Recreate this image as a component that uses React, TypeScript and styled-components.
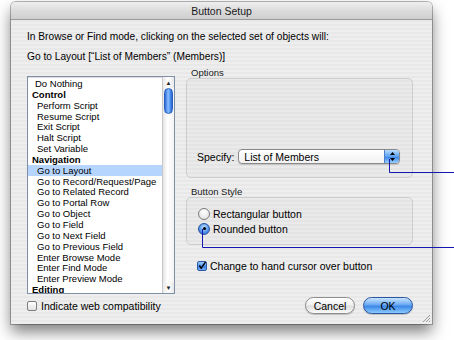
import React from 'react';
import styled, { createGlobalStyle, css } from 'styled-components';

const GlobalStyle = createGlobalStyle`
  html, body {
    margin: 0;
    padding: 0;
    background: #ffffff;
  }
  body {
    font-family: "Liberation Sans", Arial, sans-serif;
    font-size: 10px;
    color: #000;
  }
`;

const Page = styled.div`
  position: relative;
  width: 454px;
  height: 340px;
  overflow: hidden;
  padding: 2px 0 0 11px;
  box-sizing: border-box;
`;

const Window = styled.div`
  width: 421px;
  height: 322px;
  display: flex;
  flex-direction: column;
  border-radius: 5px 5px 0 0;
  box-shadow: 0 0 0 1px rgba(0, 0, 0, 0.28), 0 8px 15px rgba(0, 0, 0, 0.5);
  background: repeating-linear-gradient(
    to bottom,
    #eeeeee 0px,
    #eeeeee 2px,
    #e8e8e8 2px,
    #e8e8e8 4px
  );
  overflow: hidden;
`;

const TitleBar = styled.div`
  height: 17px;
  flex: none;
  display: flex;
  align-items: center;
  justify-content: center;
  font-size: 10.5px;
  color: #1a1a1a;
  background: linear-gradient(to bottom, #efefef 0%, #dadada 55%, #cfcfcf 100%);
  border-bottom: 1px solid #9a9a9a;
`;

const Body = styled.div`
  flex: 1;
  display: flex;
  flex-direction: column;
  padding: 0 18px 0 16px;
  position: relative;
`;

const Line = styled.div<{ $top: number }>`
  height: 13px;
  line-height: 13px;
  margin-top: ${p => p.$top}px;
  white-space: nowrap;
  font-size: 10.2px;
`;

const Main = styled.div`
  display: flex;
  gap: 11px;
  margin-top: 13px;
  flex: 1;
`;

const LeftCol = styled.div`
  width: 148px;
  display: flex;
  flex-direction: column;
`;

const ListBox = styled.div`
  height: 218px;
  box-sizing: border-box;
  border: 1px solid #7f8fa6;
  box-shadow: inset 0 1px 1px rgba(0, 0, 0, 0.15);
  background: #fff;
  display: flex;
  overflow: hidden;
`;

const Items = styled.div`
  flex: 1;
  padding-top: 1px;
`;

const Item = styled.div<{ $head?: boolean; $sel?: boolean; $indent: number }>`
  height: 10.85px;
  line-height: 11px;
  font-size: 9.5px;
  white-space: nowrap;
  padding-left: ${p => p.$indent}px;
  ${p => p.$head && css`font-weight: bold;`}
  ${p => p.$sel && css`background: #b5d5ff;`}
`;

const ScrollBar = styled.div`
  width: 11px;
  flex: none;
  display: flex;
  flex-direction: column;
  border-left: 1px solid #c8c8c8;
  background: linear-gradient(to right, #e4e4e4, #ffffff 40%, #f4f4f4);
`;

const Arrow = styled.div`
  height: 11px;
  flex: none;
  display: flex;
  align-items: center;
  justify-content: center;
  font-size: 6px;
  color: #222;
  background: linear-gradient(to right, #eaeaea, #ffffff 50%, #e8e8e8);
`;

const Thumb = styled.div`
  height: 26px;
  margin: 0 1px;
  border-radius: 5px;
  border: 1px solid #2a5fbf;
  background: linear-gradient(to right, #2a6ad8, #8cc0ff 45%, #4a8ff0 75%, #2a66d0);
  box-sizing: border-box;
`;

const Track = styled.div`
  flex: 1;
`;

const CheckRow = styled.label<{ $top: number }>`
  display: flex;
  align-items: center;
  gap: 4px;
  height: 13px;
  margin-top: ${p => p.$top}px;
  white-space: nowrap;
  font-size: 10.5px;
`;

const Box = styled.span<{ $on?: boolean }>`
  width: 10px;
  height: 10px;
  flex: none;
  box-sizing: border-box;
  border-radius: 2px;
  border: 1px solid #7d7d7d;
  display: flex;
  align-items: center;
  justify-content: center;
  background: ${p =>
    p.$on
      ? 'linear-gradient(to bottom, #9ccbff, #3d86e6 60%, #70b0ff)'
      : 'linear-gradient(to bottom, #ffffff, #e3e3e3)'};
  ${p => p.$on && css`border-color: #2a57a8;`}
`;

const RightCol = styled.div`
  width: 227px;
  display: flex;
  flex-direction: column;
`;

const GroupLabel = styled.div<{ $top: number }>`
  height: 11px;
  line-height: 11px;
  font-size: 9.5px;
  margin: ${p => p.$top}px 0 0 5px;
  color: #1a1a1a;
`;

const Group = styled.div<{ $h: number; $top: number }>`
  height: ${p => p.$h}px;
  box-sizing: border-box;
  margin-top: ${p => p.$top}px;
  border: 1px solid #cdcdcd;
  border-radius: 5px;
  background: rgba(0, 0, 0, 0.015);
  display: flex;
  flex-direction: column;
`;

const SpecifyRow = styled.div`
  margin-top: auto;
  margin-bottom: 13px;
  display: flex;
  align-items: center;
  padding-left: 10px;
  gap: 4px;
  font-size: 10.5px;
`;

const Popup = styled.div`
  width: 162px;
  height: 15px;
  box-sizing: border-box;
  border: 1px solid #8a8a8a;
  border-radius: 4px;
  background: linear-gradient(to bottom, #ffffff, #f2f2f2);
  display: flex;
  align-items: center;
  overflow: hidden;
  box-shadow: 0 1px 1px rgba(0, 0, 0, 0.15);
`;

const PopupText = styled.span`
  flex: 1;
  padding-left: 5px;
  font-size: 10.5px;
`;

const PopupArrows = styled.span`
  width: 14px;
  height: 100%;
  display: flex;
  align-items: center;
  justify-content: center;
  border-left: 1px solid #4a7fcc;
  background: linear-gradient(to bottom, #b8dcff, #5aa0f0 50%, #3f86e4 55%, #9ad0ff);
`;

const RadioRow = styled.div<{ $top: number }>`
  display: flex;
  align-items: center;
  gap: 3px;
  height: 13px;
  margin: ${p => p.$top}px 0 0 11px;
  font-size: 10.5px;
  white-space: nowrap;
`;

const Radio = styled.span<{ $on?: boolean }>`
  width: 12px;
  height: 12px;
  flex: none;
  box-sizing: border-box;
  border-radius: 50%;
  border: 1px solid #7a7a7a;
  display: flex;
  align-items: center;
  justify-content: center;
  background: ${p =>
    p.$on
      ? 'radial-gradient(circle at 50% 35%, #c4e2ff, #4b90ea 60%, #2f6fd0)'
      : 'radial-gradient(circle at 50% 30%, #ffffff, #dcdcdc)'};
  ${p => p.$on && css`border-color: #28509a;`}
`;

const Dot = styled.span`
  width: 3px;
  height: 3px;
  border-radius: 50%;
  background: #000;
`;

const Buttons = styled.div`
  margin-top: auto;
  margin-bottom: 10px;
  display: flex;
  justify-content: flex-end;
  gap: 8px;
`;

const Pill = styled.button<{ $primary?: boolean }>`
  width: 50px;
  height: 17px;
  box-sizing: border-box;
  border-radius: 8.5px;
  font-family: inherit;
  font-size: 10.5px;
  padding: 0;
  color: #000;
  border: 1px solid ${p => (p.$primary ? '#2b55a0' : '#8d8d8d')};
  background: ${p =>
    p.$primary
      ? 'linear-gradient(to bottom, #c9e4ff 0%, #6aaaf2 45%, #3c87e6 55%, #8ccaff 100%)'
      : 'linear-gradient(to bottom, #ffffff 0%, #f0f0f0 45%, #dedede 55%, #fafafa 100%)'};
  box-shadow: 0 1px 1px rgba(0, 0, 0, 0.2);
`;

const Grip = styled.svg`
  position: absolute;
  right: 1px;
  bottom: 1px;
`;

const Annot = styled.svg`
  position: absolute;
  left: 0;
  top: 0;
  pointer-events: none;
`;

const items: { t: string; head?: boolean; sel?: boolean; indent?: number }[] = [
  { t: 'Do Nothing', indent: 7 },
  { t: 'Control', head: true },
  { t: 'Perform Script' },
  { t: 'Resume Script' },
  { t: 'Exit Script' },
  { t: 'Halt Script' },
  { t: 'Set Variable' },
  { t: 'Navigation', head: true },
  { t: 'Go to Layout', sel: true },
  { t: 'Go to Record/Request/Page' },
  { t: 'Go to Related Record' },
  { t: 'Go to Portal Row' },
  { t: 'Go to Object' },
  { t: 'Go to Field' },
  { t: 'Go to Next Field' },
  { t: 'Go to Previous Field' },
  { t: 'Enter Browse Mode' },
  { t: 'Enter Find Mode' },
  { t: 'Enter Preview Mode' },
  { t: 'Editing', head: true },
];

const Check = () => (
  <svg width="9" height="9" viewBox="0 0 9 9">
    <path d="M1.5 4.5 L3.6 7.5 L8.5 0.5" fill="none" stroke="#000" strokeWidth="1.6" />
  </svg>
);

export default function App() {
  return (
    <>
      <GlobalStyle />
      <Page>
        <Window>
          <TitleBar>Button Setup</TitleBar>
          <Body>
            <Line $top={10}>In Browse or Find mode, clicking on the selected set of objects will:</Line>
            <Line $top={7}>Go to Layout [“List of Members” (Members)]</Line>
            <Main>
              <LeftCol>
                <ListBox>
                  <Items>
                    {items.map(i => (
                      <Item
                        key={i.t}
                        $head={i.head}
                        $sel={i.sel}
                        $indent={i.indent ?? (i.head ? 4 : 9)}
                      >
                        {i.t}
                      </Item>
                    ))}
                  </Items>
                  <ScrollBar>
                    <Arrow>▲</Arrow>
                    <Thumb />
                    <Track />
                    <Arrow>▼</Arrow>
                  </ScrollBar>
                </ListBox>
                <CheckRow $top={5}>
                  <Box />
                  Indicate web compatibility
                </CheckRow>
              </LeftCol>
              <RightCol>
                <GroupLabel $top={-9}>Options</GroupLabel>
                <Group $h={100} $top={0}>
                  <SpecifyRow>
                    Specify:
                    <Popup>
                      <PopupText>List of Members</PopupText>
                      <PopupArrows>
                        <svg width="5" height="9" viewBox="0 0 5 9">
                          <path d="M2.5 0 L5 3 L0 3 Z M2.5 9 L5 6 L0 6 Z" fill="#000" />
                        </svg>
                      </PopupArrows>
                    </Popup>
                  </SpecifyRow>
                </Group>
                <GroupLabel $top={8}>Button Style</GroupLabel>
                <Group $h={48} $top={0}>
                  <RadioRow $top={9}>
                    <Radio />
                    Rectangular button
                  </RadioRow>
                  <RadioRow $top={2}>
                    <Radio $on>
                      <Dot />
                    </Radio>
                    Rounded button
                  </RadioRow>
                </Group>
                <RadioRow as="label" $top={14}>
                  <Box $on>
                    <Check />
                  </Box>
                  Change to hand cursor over button
                </RadioRow>
                <Buttons>
                  <Pill>Cancel</Pill>
                  <Pill $primary>OK</Pill>
                </Buttons>
              </RightCol>
            </Main>
            <Grip width="10" height="10" viewBox="0 0 10 10">
              <path d="M9 2 L2 9 M9 5 L5 9 M9 8 L8 9" stroke="#9a9a9a" strokeWidth="1" />
            </Grip>
          </Body>
        </Window>
        <Annot width="454" height="340">
          <path d="M389.5 159 V172.5 H454" fill="none" stroke="#1616b0" strokeWidth="1" />
          <path d="M202.5 229 V247.5 H454" fill="none" stroke="#1616b0" strokeWidth="1" />
        </Annot>
      </Page>
    </>
  );
}
